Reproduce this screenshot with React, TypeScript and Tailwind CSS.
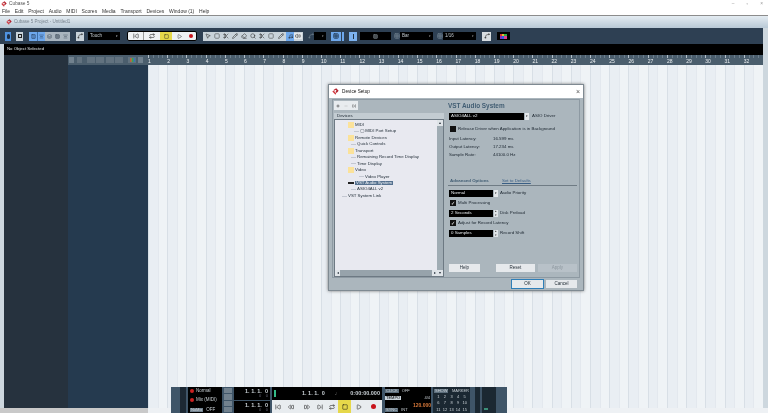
import {
  MousePointer2,
  BoxSelect,
  Scissors,
  Pencil,
  Eraser,
  Search,
  Music,
  Volume2,
  Spline,
  SkipBack,
  SkipForward,
  Rewind,
  FastForward,
  Repeat,
  Square,
  Play,
  Plus,
  Minus,
  Grid3x3,
  AlignCenter,
  Layers,
  Columns3,
} from "lucide-react";

const MENU = ["File", "Edit", "Project", "Audio", "MIDI", "Scores", "Media", "Transport", "Devices", "Window (1)", "Help"];
const BARS = Array.from({ length: 32 }, (_, i) => i + 1);

function Logo({ size = 8 }: { size?: number }) {
  return (
    <svg width={size} height={size} viewBox="0 0 10 10" className="shrink-0">
      <path d="M6 0.5 L9.5 4 L6.5 7 L5 5.5 L6.5 4 L5 2.5 L3.5 4 L2.2 2.8 Z" fill="#b3202c" />
      <path d="M0.5 5 L2.2 3.4 L6 7.4 L5 9.5 Z" fill="#d23a40" />
    </svg>
  );
}

function BlackSelect({ w, label, arrow = true }: { w: string; label?: string; arrow?: boolean }) {
  return (
    <div className={`flex h-[8px] ${w} items-center justify-between bg-black px-[2px] text-[4.5px] text-[#c4ccd2]`}>
      <span>{label}</span>
      {arrow && <span className="text-[3px] text-[#aaa]">▾</span>}
    </div>
  );
}

function Toolbar() {
  return (
    <div className="flex h-[16px] items-center bg-[#2e4053] pl-[5px]">
      <div className="flex h-[9px] w-[6px] items-center justify-center bg-[#4f92e0]">
        <div className="h-[5px] w-[3px] rounded-full bg-[#1c2f46]" />
      </div>
      <div className="ml-[5px] flex h-[9px] w-[7px] items-center justify-center bg-[#c9d3da]">
        <div className="h-[4px] w-[4px] border border-[#222]" />
      </div>
      <div className="ml-[6px] flex h-[9px] w-[41px] text-[#1c2f46]">
        <div className="flex w-[8px] items-center justify-center bg-[#6ea8ec]"><Columns3 size={5} /></div>
        <div className="flex w-[8px] items-center justify-center border-l border-[#3d6fa8] bg-[#6ea8ec]"><AlignCenter size={5} /></div>
        <div className="flex w-[25px] items-center justify-around bg-[#a9b5bf] text-[#33424f]">
          <Layers size={5} />
          <Grid3x3 size={5} />
          <AlignCenter size={5} />
        </div>
      </div>
      <div className="ml-[6px] flex h-[9px] w-[8px] items-center justify-center bg-[#c9d3da]">
        <Spline size={6} className="text-[#222]" />
      </div>
      <div className="ml-[4px] flex h-[8px] w-[32px] items-center justify-between bg-black px-[2px] text-[4.5px] text-[#c4ccd2]">
        <span>Touch</span>
        <span className="text-[3px]">▾</span>
      </div>
      {/* transport */}
      <div className="ml-[7px] flex h-[10px] w-[70px] overflow-hidden rounded-[2px] border border-black bg-[#eef1f3]">
        <div className="flex w-[15px] items-center justify-center">
          <SkipBack size={6} className="text-[#111]" />
        </div>
        <div className="flex w-[17px] items-center justify-center border-l border-[#999]">
          <Repeat size={6} className="text-[#111]" />
        </div>
        <div className="flex w-[12px] items-center justify-center bg-[#e6d84a]">
          <Square size={5} className="text-[#222]" />
        </div>
        <div className="flex w-[14px] items-center justify-center">
          <Play size={5} className="text-[#111]" />
        </div>
        <div className="flex w-[10px] items-center justify-center">
          <div className="h-[4px] w-[4px] rounded-full bg-[#c8141c]" />
        </div>
      </div>
      {/* tools */}
      <div className="ml-[6px] flex h-[9px] w-[100px] items-center bg-[#c9d3da] text-[#222]">
        <span className="flex w-[9px] justify-center"><MousePointer2 size={6} /></span>
        <span className="flex w-[9px] justify-center"><BoxSelect size={6} /></span>
        <span className="flex w-[9px] justify-center"><Scissors size={6} /></span>
        <span className="flex w-[9px] justify-center"><Pencil size={6} /></span>
        <span className="flex w-[9px] justify-center"><Eraser size={6} /></span>
        <span className="flex w-[9px] justify-center"><Search size={6} /></span>
        <span className="flex w-[9px] justify-center"><Scissors size={6} /></span>
        <span className="flex w-[9px] justify-center"><BoxSelect size={6} /></span>
        <span className="flex w-[11px] justify-center"><Pencil size={6} /></span>
        <span className="flex h-full w-[8px] items-center justify-center bg-[#6ea8ec]"><Music size={5} /></span>
        <span className="flex w-[8px] justify-center bg-[#e3e8ec]"><Volume2 size={6} /></span>
      </div>
      <div className="ml-[4px] flex h-[8px] w-[7px] items-center justify-center text-[#7d8c98]">
        <Spline size={6} />
      </div>
      <BlackSelect w="w-[12px]" />
      <div className="ml-[5px] flex h-[9px] w-[13px]">
        <div className="flex w-[10px] items-center justify-center bg-[#6ea8ec]">
          <Grid3x3 size={6} className="text-[#123]" />
        </div>
        <div className="ml-px w-[2px] bg-[#6ea8ec]" />
      </div>
      <div className="ml-[5px] flex h-[9px] w-[8px] items-center justify-center bg-[#7cb2ef]">
        <div className="h-[5px] w-[1px] bg-[#234]" />
      </div>
      <div className="ml-[3px] flex h-[8px] w-[31px] items-center justify-center bg-black">
        <Grid3x3 size={5} className="text-[#9aa5ad]" />
      </div>
      <div className="ml-[3px] flex h-[8px] w-[6px] items-center justify-center text-[#7d8c98]">
        <Grid3x3 size={6} />
      </div>
      <BlackSelect w="w-[33px]" label="Bar" />
      <div className="ml-[4px] flex h-[8px] w-[6px] items-center justify-center text-[#7d8c98]">
        <Grid3x3 size={6} />
      </div>
      <BlackSelect w="w-[33px]" label="1/16" />
      <div className="ml-[6px] flex h-[9px] w-[9px] items-center justify-center bg-[#d7dde1]">
        <Spline size={6} className="text-[#222]" />
      </div>
      <div className="ml-[6px] flex h-[8px] w-[13px] items-center justify-center bg-black">
        <div className="flex h-[5px] w-[7px] flex-wrap">
          <div className="h-[2px] w-[2px] bg-[#e03030]" />
          <div className="h-[2px] w-[2px] bg-[#e0c030]" />
          <div className="h-[2px] w-[3px] bg-[#30b040]" />
          <div className="h-[3px] w-[2px] bg-[#8030c0]" />
          <div className="h-[3px] w-[2px] bg-[#3060e0]" />
          <div className="h-[3px] w-[3px] bg-[#e04090]" />
        </div>
      </div>
    </div>
  );
}

function Ruler() {
  return (
    <div className="flex h-[10px] shrink-0 bg-[#4b5e6d]">
      {BARS.map((n) => (
        <div key={n} className="flex flex-1 flex-col text-[5px] leading-[7px] text-[#eef1f3]">
          <div className="flex h-[3px]">
            <div className="flex-1 border-l border-[#b4c0c9]" />
            <div className="flex-1 border-l border-[#6d7f8c]" />
            <div className="flex-1 border-l border-[#6d7f8c]" />
            <div className="flex-1 border-l border-[#6d7f8c]" />
          </div>
          <span>{n}</span>
        </div>
      ))}
    </div>
  );
}

function Grid() {
  return (
    <div className="flex flex-1 bg-[#e9eef3]">
      {BARS.map((n) => (
        <div key={n} className="flex flex-1 border-l border-[#d8dfe6]">
          <div className="flex-1 border-r border-[#e3e8ee]" />
          <div className="flex-1 bg-[#eff3f6]" />
        </div>
      ))}
    </div>
  );
}

function TreeRow({
  indent,
  label,
  folder,
  dash,
}: {
  indent: string;
  label: string;
  folder?: boolean;
  dash?: boolean;
}) {
  return (
    <div className={`flex h-[6.45px] items-center ${indent}`}>
      {folder && <div className="mr-[1px] h-[6px] w-[6px] bg-[#fbe29a]" />}
      {dash && <div className="mr-[1px] h-px w-[5px] bg-[#c3c7d1]" />}
      <span>{label}</span>
    </div>
  );
}

function Check({ on = true }: { on?: boolean }) {
  return (
    <div className="flex h-[6px] w-[6px] items-center justify-center bg-[#111] text-[5px] leading-none text-white">
      {on ? "✓" : ""}
    </div>
  );
}

function Spin() {
  return (
    <div className="ml-px flex h-[7px] w-[4px] flex-col text-[3px] leading-[3.5px] text-[#333]">
      <span className="bg-[#dfe4e8] text-center">▴</span>
      <span className="bg-[#dfe4e8] text-center">▾</span>
    </div>
  );
}

function DarkField({ w, label, spin, arrow }: { w: string; label: string; spin?: boolean; arrow?: boolean }) {
  return (
    <div className="flex items-center">
      <div className={`flex h-[7px] ${w} items-center bg-black px-[2px] text-[4.4px] text-[#e4e8eb]`}>{label}</div>
      {spin && <Spin />}
      {arrow && <div className="ml-px flex h-[7px] w-[4px] items-center justify-center bg-[#e4e8eb] text-[3px] text-black">▾</div>}
    </div>
  );
}

function DlgButton({ w, label, dim, focus }: { w: string; label: string; dim?: boolean; focus?: boolean }) {
  return (
    <div
      className={`flex h-[8px] ${w} items-center justify-center text-[4.5px] ${
        dim ? "bg-[#b8c1c8] text-[#8d979f]" : "bg-[#e6e9ec] text-[#1f2a33]"
      } ${focus ? "outline outline-1 outline-[#2f7fb8]" : ""}`}
    >
      {label}
    </div>
  );
}

function DeviceSetup() {
  return (
    <div className="absolute left-[328px] top-[84px] flex h-[207px] w-[256px] flex-col border border-[#7f8a92] bg-[#abb6bd] text-[#1c2630] shadow-[0_0_3px_#777]">
      <div className="flex h-[13px] items-center justify-between bg-white pl-[3px] pr-[3px]">
        <div className="flex items-center gap-[3px] text-[4.7px] text-[#111]">
          <Logo size={7} />
          Device Setup
        </div>
        <span className="text-[7px] leading-none text-[#555]">×</span>
      </div>
      <div className="mx-[3px] mt-[1px] flex h-[179px] border border-[#8d99a2] pl-[1px]">
        {/* left side */}
        <div className="flex w-[110px] flex-col pt-[1px]">
          <div className="flex h-[9px] w-[24px] items-center justify-around bg-[#e8ecef] text-[#222]">
            <Plus size={4} strokeWidth={3} />
            <Minus size={4} className="text-[#999]" />
            <SkipForward size={4} />
          </div>
          <div className="mt-[3px] h-[6px] w-[110px] bg-[#c3ccd2] pl-[3px] text-[4.4px] leading-[6px]">Devices</div>
          <div className="flex flex-1 border border-[#6d7983]">
            <div className="flex flex-1 flex-col text-[4.35px] leading-none text-[#26323c]">
              <div className="flex-1 bg-[#e8e9f0] pl-[1px] pt-[2px]">
                <TreeRow indent="pl-[12px]" label="MIDI" folder />
                <TreeRow indent="pl-[18px]" label="◯ MIDI Port Setup" dash />
                <TreeRow indent="pl-[12px]" label="Remote Devices" folder />
                <TreeRow indent="pl-[15px]" label="Quick Controls" dash />
                <TreeRow indent="pl-[12px]" label="Transport" folder />
                <TreeRow indent="pl-[15px]" label="Remaining Record Time Display" dash />
                <TreeRow indent="pl-[15px]" label="Time Display" dash />
                <TreeRow indent="pl-[12px]" label="Video" folder />
                <TreeRow indent="pl-[23px]" label="Video Player" dash />
                <div className="flex h-[6.45px] items-center pl-[12px]">
                  <div className="mr-[1px] h-[2px] w-[6px] bg-[#222]" />
                  <span className="bg-[#55718f] px-px text-[#e8edf1]">VST Audio System</span>
                </div>
                <TreeRow indent="pl-[15px]" label="ASIO4ALL v2" dash />
                <TreeRow indent="pl-[6px]" label="VST System Link" dash />
              </div>
              <div className="flex h-[6px] justify-between bg-[#97a3ab] text-[4px] leading-[6px]">
                <span className="w-[5px] bg-[#dfe4e8] text-center">◂</span>
                <span className="w-[5px] bg-[#dfe4e8] text-center">▸</span>
              </div>
            </div>
            <div className="flex w-[6px] flex-col justify-between bg-[#a0acb4] text-center text-[4px] leading-[6px]">
              <span className="bg-[#dfe4e8]">▴</span>
              <span className="bg-[#dfe4e8]">▾</span>
            </div>
          </div>
        </div>
        {/* right side */}
        <div className="ml-[4px] flex w-[130px] flex-col text-[4.4px] leading-none">
          <div className="mt-[1px] text-[6.4px] font-bold leading-[9px] text-[#415d73]">VST Audio System</div>
          <div className="mt-[3px] flex items-center pl-px">
            <DarkField w="w-[75px]" label="ASIO4ALL v2" arrow />
            <span className="ml-[3px]">ASIO Driver</span>
          </div>
          <div className="mt-[6px] flex items-center gap-[2px] pl-[2px]">
            <Check on={false} />
            <span>Release Driver when Application is in Background</span>
          </div>
          <div className="mt-[3px] flex h-[8px] items-center pl-px">
            <span className="w-[44px]">Input Latency:</span>16.599 ms
          </div>
          <div className="flex h-[8px] items-center pl-px">
            <span className="w-[44px]">Output Latency:</span>17.234 ms
          </div>
          <div className="flex h-[8px] items-center pl-px">
            <span className="w-[44px]">Sample Rate:</span>44100.0 Hz
          </div>
          <div className="mt-[19px] flex h-[6px] items-center pl-[2px]">
            <span className="w-[52px] font-bold text-[#415d73]">Advanced Options</span>
            <span className="text-[#3a5f85] underline">Set to Defaults</span>
          </div>
          <div className="mt-[1px] h-px w-[129px] bg-[#6f7b84]" />
          <div className="mt-[4px] flex items-center pl-px">
            <DarkField w="w-[44px]" label="Normal" arrow />
            <span className="ml-[2px]">Audio Priority</span>
          </div>
          <div className="mt-[3px] flex items-center gap-[2px] pl-[2px]">
            <Check />
            <span>Multi Processing</span>
          </div>
          <div className="mt-[4px] flex items-center pl-px">
            <DarkField w="w-[44px]" label="2 Seconds" spin />
            <span className="ml-[2px]">Disk Preload</span>
          </div>
          <div className="mt-[3px] flex items-center gap-[2px] pl-[2px]">
            <Check />
            <span>Adjust for Record Latency</span>
          </div>
          <div className="mt-[4px] flex items-center pl-px">
            <DarkField w="w-[44px]" label="0 Samples" spin />
            <span className="ml-[2px]">Record Shift</span>
          </div>
          <div className="mt-[27px] flex pl-px">
            <DlgButton w="w-[31px]" label="Help" />
            <div className="ml-[16px]">
              <DlgButton w="w-[39px]" label="Reset" />
            </div>
            <div className="ml-[3px]">
              <DlgButton w="w-[39px]" label="Apply" dim />
            </div>
          </div>
        </div>
      </div>
      <div className="mt-[2px] flex justify-end gap-[3px] pr-[6px]">
        <DlgButton w="w-[31px]" label="OK" focus />
        <DlgButton w="w-[31px]" label="Cancel" />
      </div>
    </div>
  );
}

function Transport() {
  return (
    <div className="absolute left-[171px] top-[387px] flex h-[26px] w-[336px] items-stretch bg-[#3f5568] text-[4.5px] leading-none text-[#c9d0d5]">
      <div className="ml-[9px] w-[6px] bg-[#1c2833]" />
      <div className="ml-[2px] flex w-[34px] flex-col justify-between bg-black pl-[2px] pt-[2px]">
        <div className="flex items-center gap-[2px]"><span className="h-[4px] w-[4px] rounded-full bg-[#c22]" />Normal</div>
        <div className="flex items-center gap-[2px]"><span className="h-[4px] w-[4px] rounded-full bg-[#c22]" />Mix (MIDI)</div>
        <div className="flex h-[6px] items-center gap-[3px]"><span className="bg-[#71818e] px-px text-[4px]">NoMix</span>OFF</div>
      </div>
      <div className="ml-[2px] flex w-[8px] flex-col gap-px py-[1px]">
        <div className="flex-1 bg-[#71818e]" />
        <div className="flex-1 bg-[#71818e]" />
        <div className="flex-1 bg-[#71818e]" />
        <div className="flex-1 bg-[#71818e]" />
      </div>
      <div className="ml-[2px] flex w-[36px] flex-col gap-px">
        <div className="flex-1 bg-black pr-[2px] pt-[1px] text-right text-[5.5px] font-bold leading-[6px]">
          1. 1. 1. &nbsp;0
          <div className="text-[4px] font-normal leading-[4px] text-[#667]">0 &nbsp;&nbsp; 0</div>
        </div>
        <div className="flex-1 bg-black pr-[2px] pt-[1px] text-right text-[5.5px] font-bold leading-[6px]">
          1. 1. 1. &nbsp;0
          <div className="text-[4px] font-normal leading-[4px] text-[#667]">0 &nbsp;&nbsp; 0</div>
        </div>
      </div>
      <div className="ml-[2px] flex w-[110px] flex-col">
        <div className="flex h-[13px] items-center justify-between bg-black px-[2px] text-[5.5px] font-bold">
          <span className="h-[7px] w-[2px] bg-[#3b8]" />
          <span className="ml-[16px]">1. 1. 1. &nbsp;0</span>
          <span className="text-[#888]">♩</span>
          <span>0:00:00.000</span>
        </div>
        <div className="flex h-[13px] items-center overflow-hidden bg-[#e8ecef] text-[#111]">
          <span className="flex w-[11px] justify-center"><SkipBack size={6} /></span>
          <span className="flex w-[16px] justify-center"><Rewind size={6} /></span>
          <span className="flex w-[15px] justify-center"><FastForward size={6} /></span>
          <span className="flex w-[11px] justify-center"><SkipForward size={6} /></span>
          <span className="flex w-[13px] justify-center"><Repeat size={6} /></span>
          <span className="flex h-full w-[13px] items-center justify-center bg-[#e6d84a]"><Square size={6} /></span>
          <span className="flex w-[15px] justify-center"><Play size={6} /></span>
          <span className="flex w-[14px] justify-center"><span className="h-[5px] w-[5px] rounded-full bg-[#c8141c]" /></span>
        </div>
      </div>
      <div className="ml-[3px] flex w-[46px] flex-col bg-black text-[4px]">
        <div className="flex h-[8px] items-center gap-[3px]"><span className="bg-[#5c6e7c] px-px">CLICK</span>OFF</div>
        <div className="flex h-[9px] items-center justify-between pr-px"><span className="bg-[#c9d3da] px-px text-black">TEMPO</span><span>4/4</span></div>
        <div className="text-right text-[5px] font-bold text-[#d9793a]">120.000</div>
        <div className="mt-auto flex h-[6px] items-center gap-[3px]"><span className="bg-[#5c6e7c] px-px">SYNC</span>INT</div>
      </div>
      <div className="ml-[2px] flex w-[37px] flex-col bg-[#1b2832] text-[4px]">
        <div className="flex h-[7px] items-center justify-between px-px"><span className="bg-[#5c6e7c] px-px">SHOW</span>MARKER</div>
        <div className="grid flex-1 grid-cols-5 px-[2px] text-center leading-[6px]">
          {[1, 2, 3, 4, 5, 6, 7, 8, 9, 10, 11, 12, 13, 14, 15].map((n) => (
            <span key={n}>{n}</span>
          ))}
        </div>
      </div>
      <div className="ml-[5px] w-[5px] bg-[#1b2832]" />
      <div className="ml-[2px] flex w-[14px] flex-col bg-[#1b2832]">
        <div className="mb-[3px] ml-[2px] mt-auto h-[2px] w-[4px] bg-[#3b8f78]" />
      </div>
    </div>
  );
}

export default function App() {
  return (
    <div
      className="relative flex h-[413px] w-[768px] flex-col overflow-hidden bg-white blur-[0.3px]"
      style={{ fontFamily: '"Liberation Sans", Arial, sans-serif' }}
    >
      <div className="flex h-[8px] items-center gap-[2px] pl-[1px] text-[4.8px] leading-none text-[#555]">
        <Logo size={6} />
        Cubase 5
        <div className="ml-auto flex gap-[12px] pr-[5px] text-[#999]">
          <span>–</span>
          <span>▫</span>
          <span>×</span>
        </div>
      </div>
      <div className="flex h-[7px] items-center gap-[4.8px] pl-[2px] text-[5px] leading-none text-[#333]">
        {MENU.map((m) => (
          <span key={m}>{m}</span>
        ))}
      </div>
      <div className="h-px bg-[#8c8c8c]" />
      <div className="flex min-h-0 flex-1 flex-col bg-[#cdd7de]">
        <div className="flex min-h-0 flex-1 flex-col pl-[4px] pr-[5px]">
          <div className="-ml-[4px] -mr-[5px] flex h-[12px] shrink-0 items-center gap-[2px] bg-gradient-to-b from-[#e4ecf2] to-[#b9c9d6] pl-[6px] text-[4.5px] text-[#77838e]">
            <Logo size={6} />
            Cubase 5 Project - Untitled1
          </div>
          <div className="-ml-[4px] shrink-0">
            <Toolbar />
          </div>
          <div className="flex h-[11px] shrink-0 items-center bg-black pl-[3px] text-[4.3px] text-[#e2e6e9]">No Object Selected</div>
          <div className="flex min-h-0 flex-1">
            <div className="w-[64px] bg-[#26323e]" />
            <div className="flex w-[80px] flex-col bg-[#253a4f]">
              <div className="flex h-[10px] items-center gap-[1px] bg-[#4b5e6d] pl-[1px]">
                <div className="h-[6px] w-[5px] bg-[#71818e]" />
                <div className="ml-[2px] h-[6px] w-[5px] bg-[#62727f]" />
                <div className="ml-[4px] h-[6px] w-[8px] bg-[#62727f]" />
                <div className="h-[6px] w-[8px] bg-[#62727f]" />
                <div className="ml-[1px] h-[6px] w-[8px] bg-[#62727f]" />
                <div className="h-[6px] w-[8px] bg-[#62727f]" />
                <div className="ml-[4px] flex h-[6px] w-[8px] items-center justify-center bg-[#62727f]">
                  <div className="h-[4px] w-[5px] bg-gradient-to-r from-[#d04040] via-[#40a050] to-[#4060d0]" />
                </div>
                <div className="ml-px h-[6px] w-[5px] bg-[#71818e]" />
              </div>
            </div>
            <div className="flex flex-1 flex-col">
              <Ruler />
              <Grid />
            </div>
          </div>
        </div>
        <div className="flex h-[5px] shrink-0">
          <div className="w-[148px] bg-[#c9c9c9]" />
          <div className="flex-1 bg-[#eef1f4]" />
        </div>
      </div>
      <DeviceSetup />
      <Transport />
    </div>
  );
}
